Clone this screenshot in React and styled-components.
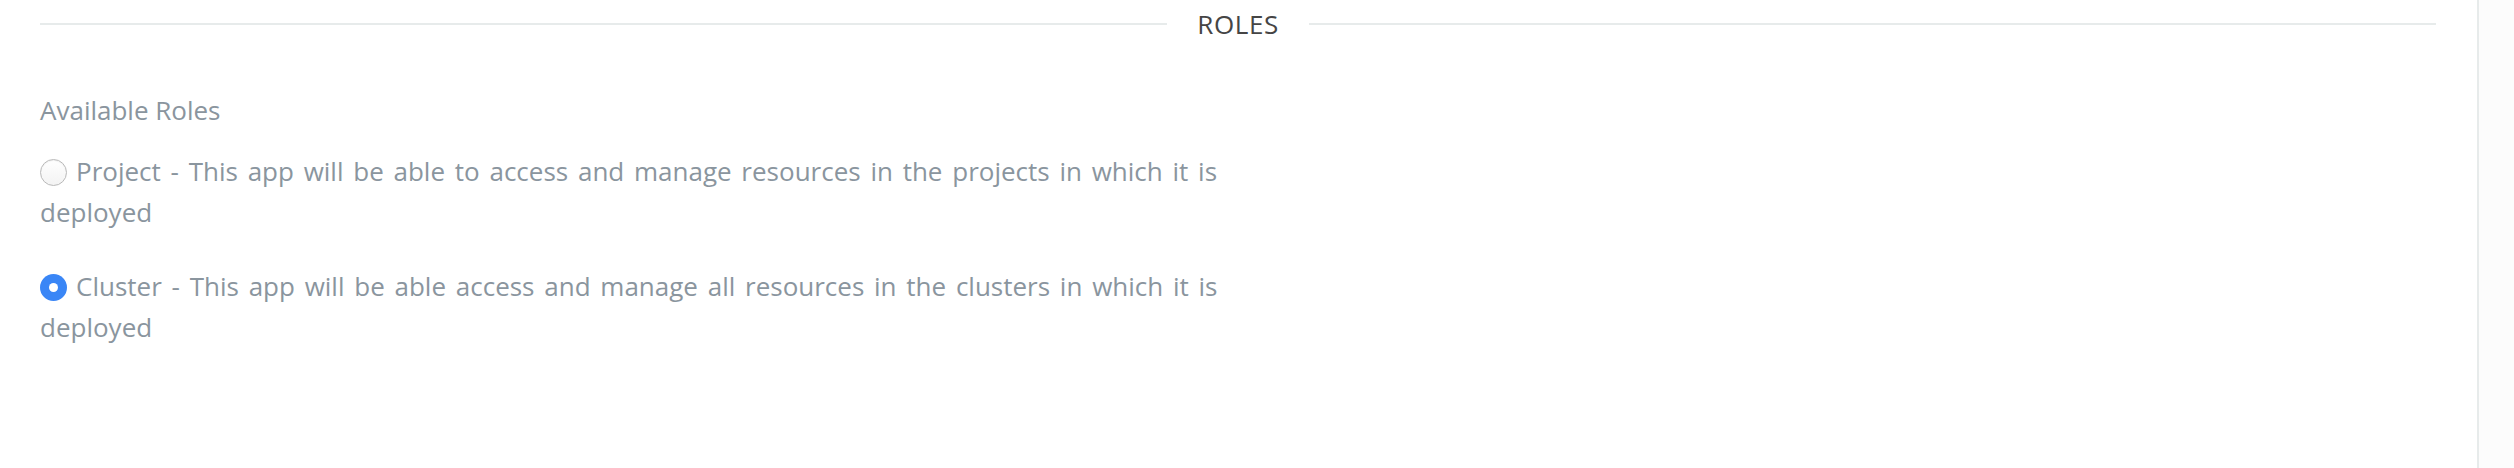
import React from "react";
import styled, { createGlobalStyle } from "styled-components";

const GlobalStyle = createGlobalStyle`
  html, body {
    margin: 0;
    padding: 0;
    background: #ffffff;
  }
  body {
    font-family: "Open Sans", "Liberation Sans", sans-serif;
  }
`;

const Page = styled.div`
  display: flex;
  width: 2514px;
  height: 468px;
  overflow: hidden;
`;

const Main = styled.main`
  flex: 1;
  border-right: 2px solid #e7ebeb;
  padding: 0 41px 0 40px;
  background: #ffffff;
`;

const Gutter = styled.aside`
  width: 35px;
  background: #fcfcfc;
`;

const Divider = styled.div`
  display: flex;
  align-items: center;
  gap: 30px;
  height: 48px;
`;

const Rule = styled.span`
  flex: 1;
  height: 2px;
  background: #e7ebeb;
`;

const DividerTitle = styled.h2`
  margin: 0;
  font-size: 26px;
  font-weight: 400;
  letter-spacing: 0.6px;
  color: #454545;
  line-height: 48px;
`;

const Section = styled.section`
  padding-top: 42px;
  font-size: 26px;
  line-height: 41.6px;
  color: #8a959e;
`;

const SectionLabel = styled.div`
  margin-bottom: 19px;
`;

const OptionList = styled.div`
  display: flex;
  flex-direction: column;
  gap: 32px;
  max-width: 1240px;
`;

const Option = styled.label`
  display: block;
  cursor: pointer;
  word-spacing: 3px;
`;

const Radio = styled.span`
  display: inline-block;
  box-sizing: border-box;
  width: 27px;
  height: 27px;
  margin-right: 9px;
  border-radius: 50%;
  vertical-align: -5px;
  position: relative;
  background: ${(p) =>
    p.$checked ? "#3a86f6" : "linear-gradient(#ffffff, #f3f3f3)"};
  border: ${(p) => (p.$checked ? "none" : "1.5px solid #b9b9b9")};
  box-shadow: ${(p) =>
    p.$checked ? "none" : "inset 0 1px 1px rgba(0,0,0,0.06)"};

  &::after {
    content: "";
    display: ${(p) => (p.$checked ? "block" : "none")};
    position: absolute;
    left: 50%;
    top: 50%;
    width: 9px;
    height: 9px;
    margin: -4.5px 0 0 -4.5px;
    border-radius: 50%;
    background: #ffffff;
  }
`;

const roles = [
  {
    id: "project",
    name: "Project",
    text: "This app will be able to access and manage resources in the projects in which it is deployed",
    checked: false,
  },
  {
    id: "cluster",
    name: "Cluster",
    text: "This app will be able access and manage all resources in the clusters in which it is deployed",
    checked: true,
  },
];

export default function App() {
  return (
    <>
      <GlobalStyle />
      <Page>
        <Main>
          <Divider>
            <Rule />
            <DividerTitle>ROLES</DividerTitle>
            <Rule />
          </Divider>
          <Section>
            <SectionLabel>Available Roles</SectionLabel>
            <OptionList>
              {roles.map((r) => (
                <Option key={r.id}>
                  <Radio $checked={r.checked} />
                  {r.name} - {r.text}
                </Option>
              ))}
            </OptionList>
          </Section>
        </Main>
        <Gutter />
      </Page>
    </>
  );
}
